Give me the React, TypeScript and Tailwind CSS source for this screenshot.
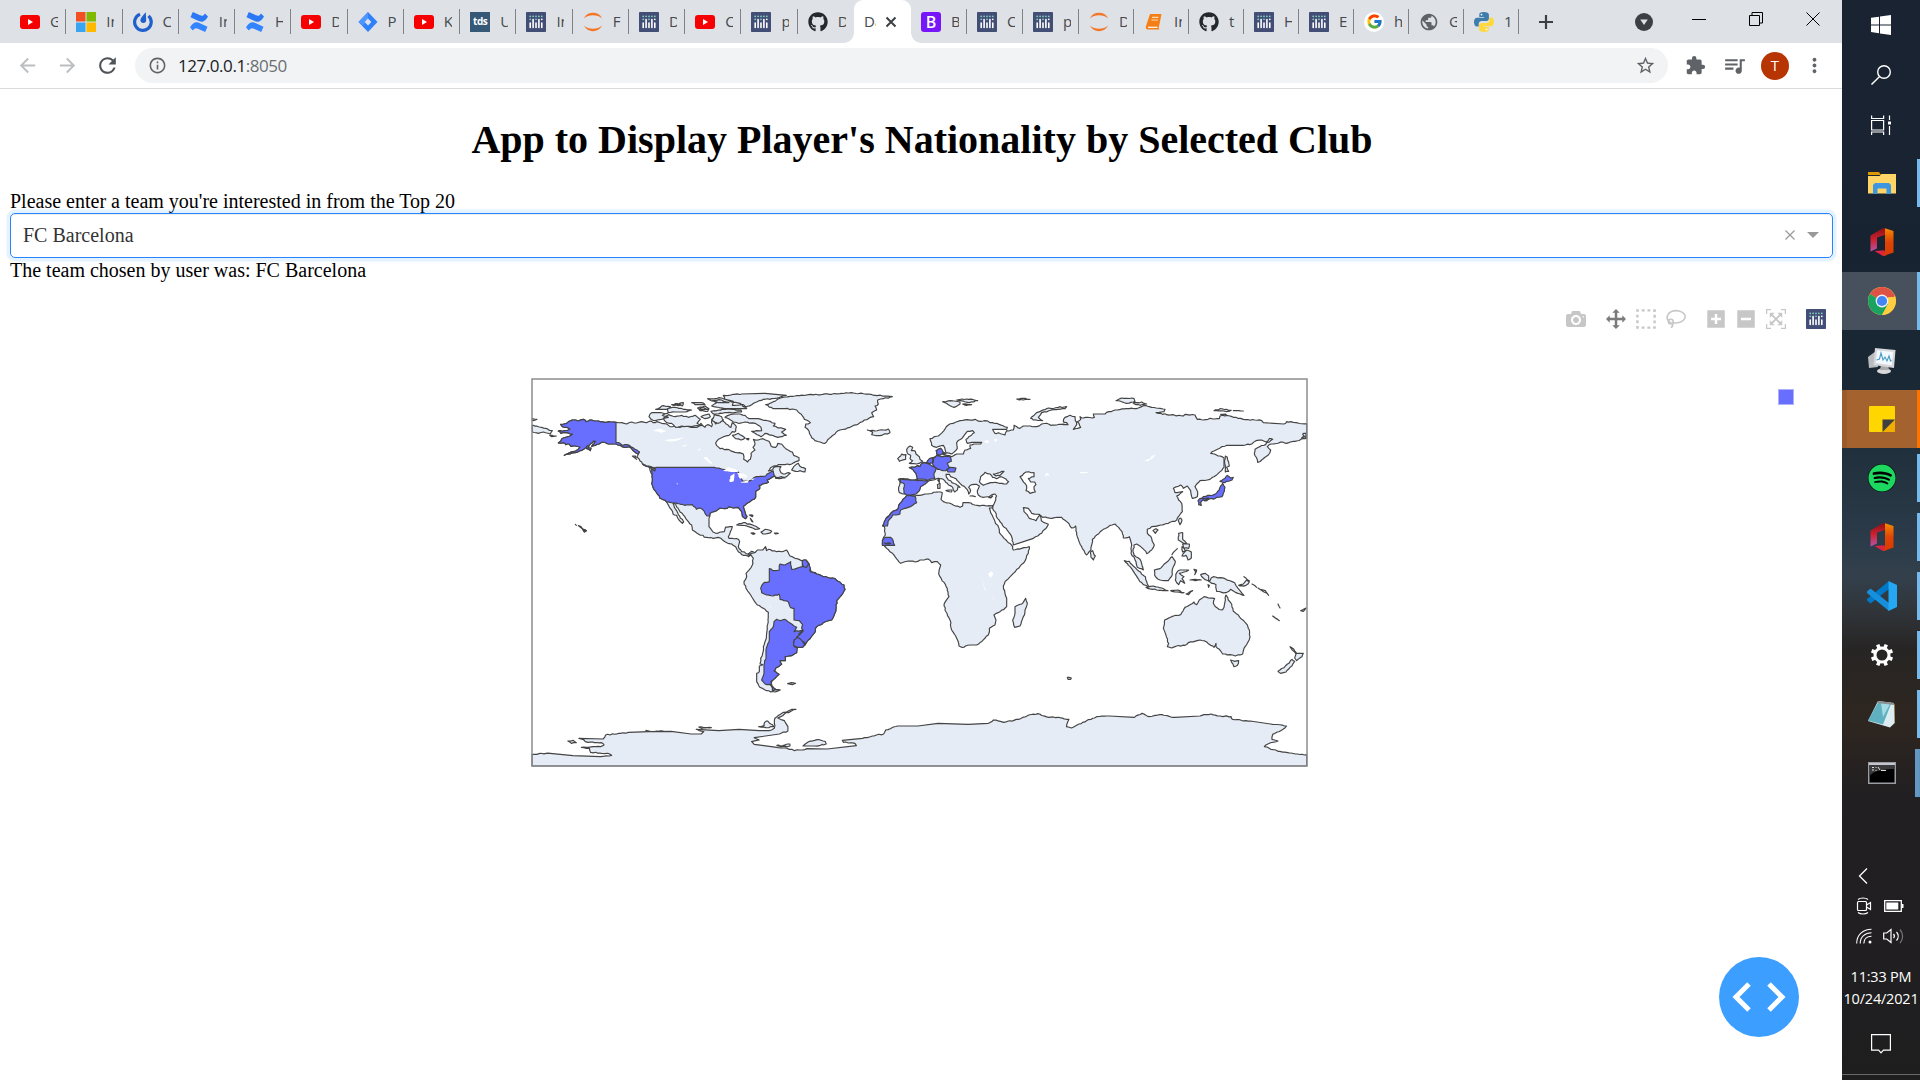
import type { ReactNode } from 'react';
import {
  MdArrowBack,
  MdArrowForward,
  MdRefresh,
  MdInfoOutline,
  MdStarBorder,
  MdExtension,
  MdQueueMusic,
  MdMoreVert,
  MdPublic,
} from 'react-icons/md';
import { FaGithub, FaSpotify } from 'react-icons/fa';
import { FcGoogle } from 'react-icons/fc';

/* ---------- favicons ---------- */

const Youtube = () => (
  <svg viewBox="0 0 20 20" className="size-5">
    <rect y="3" width="20" height="14" rx="3" fill="#f60002" />
    <path d="M8 7v6l5-3z" fill="#fff" />
  </svg>
);
const Microsoft = () => (
  <svg viewBox="0 0 20 20" className="size-5">
    <path d="M0 0h9.5v9.5H0z" fill="#f25022" />
    <path d="M10.5 0H20v9.5h-9.5z" fill="#7fba00" />
    <path d="M0 10.5h9.5V20H0z" fill="#39a5f0" />
    <path d="M10.5 10.5H20V20h-9.5z" fill="#ffb900" />
  </svg>
);
const Mattermost = () => (
  <svg viewBox="0 0 20 20" className="size-5" fill="none" stroke="#2060cc">
    <path d="M7 2.300A8.300 8.300 0 1 0 15.500 3.900" strokeWidth="3.200" />
    <path d="M12.800 .3C9.500 4 7.200 6.500 7.400 8.600C7.700 10.400 9 11.200 10.400 11.100C12.200 11 13.200 9.700 13.200 8z" fill="#2060cc" stroke="none" />
  </svg>
);
const Confluence = () => (
  <svg viewBox="0 0 20 20" className="size-5">
    <path d="M1 15.500C4.500 9.500 7.500 9.600 11.500 11.500L18.500 14.800L16.200 20L9.500 16.900C6.500 15.500 5.700 16 4 18.500Z" fill="#3384ff" />
    <path d="M19 4.500C15.500 10.500 12.500 10.400 8.500 8.500L1.500 5.200L3.800 0L10.500 3.100C13.500 4.500 14.300 4 16 1.500Z" fill="#2a78f5" />
  </svg>
);
const Jira = () => (
  <svg viewBox="0 0 20 20" className="size-5">
    <path d="M10 0l9.500 10L10 20L.5 10z" fill="#2f80fb" />
    <path d="M10 0L.5 10L5 13.500L10 7z" fill="#4d96ff" />
    <path d="M10 6.500l3.300 3.500L10 13.500L6.700 10z" fill="#dee1e6" />
  </svg>
);
const Tds = () => (
  <div className="flex size-5 items-center justify-center bg-[#355876] font-['Open_Sans',sans-serif] text-[10px] font-bold tracking-[-0.5px] text-white">
    tds
  </div>
);
const Plotly = () => (
  <svg viewBox="0 0 20 20" className="size-5">
    <rect width="20" height="20" rx="0.800" fill="#434e76" />
    <g fill="#80cfbe">
      <circle cx="4.200" cy="4.300" r="0.900" />
      <circle cx="7.100" cy="4.300" r="0.900" />
      <circle cx="10" cy="4.300" r="0.900" />
      <circle cx="12.900" cy="4.300" r="0.900" />
      <circle cx="15.800" cy="4.300" r="0.900" />
      <circle cx="4.200" cy="7.300" r="0.900" />
      <circle cx="10" cy="7.300" r="0.900" />
    </g>
    <g fill="#fff">
      <circle cx="15.800" cy="7.300" r="0.900" />
      <rect x="3.400" y="10.200" width="1.600" height="6" rx="0.800" />
      <rect x="6.300" y="6.800" width="1.600" height="9.400" rx="0.800" />
      <rect x="9.200" y="10.200" width="1.600" height="6" rx="0.800" />
      <rect x="12.100" y="6.800" width="1.600" height="9.400" rx="0.800" />
      <rect x="15" y="10.200" width="1.600" height="6" rx="0.800" />
    </g>
  </svg>
);
const Jupyter = () => (
  <svg viewBox="0 0 20 20" className="size-5">
    <path d="M.8 6.500C3 2.500 6 .8 10 .8s7 1.700 9.200 5.700C16.500 4.200 13.500 3.200 10 3.200S3.500 4.200 .8 6.500z" fill="#f37726" />
    <path d="M.8 13.500C3 17.500 6 19.200 10 19.200s7-1.700 9.200-5.700c-2.700 2.300-5.700 3.300-9.200 3.300s-6.500-1-9.200-3.300z" fill="#f37726" />
  </svg>
);
const Github = () => <FaGithub className="size-5 text-[#24292e]" />;
const Bootstrap = () => (
  <div className="flex size-5 items-center justify-center rounded-[3px] bg-[#7716f9] font-['Open_Sans',sans-serif] text-[16px] leading-none font-semibold text-white">
    B
  </div>
);
const Book = () => (
  <svg viewBox="0 0 20 20" className="size-5">
    <path d="M6 2h11.500L15 14.500c-.6 1.200 0 2 .3 3H4C2 17.500 1.500 16 2 14z" fill="#f57f17" />
    <path d="M8 5.300h6.500M7.500 8h6.500" stroke="#ffd9ae" strokeWidth="1.200" />
    <path d="M4 15.300h9.500" stroke="#fff" strokeWidth="1.200" />
  </svg>
);
const Google = () => (
  <div className="flex size-5 items-center justify-center rounded-full bg-white">
    <FcGoogle className="size-[17px]" />
  </div>
);
const Globe = () => <MdPublic className="size-5 text-[#5f6368]" />;
const Python = () => (
  <svg viewBox="0 0 20 20" className="size-5">
    <path d="M9.800 0C6.500 0 5.300 1 5.300 2.700V5h4.900v.8H3.200C1 5.800 0 7.500 0 10s1 4.500 3 4.500h1.700V12c0-1.800 1.400-3 3-3h4.800c1.400 0 2.400-1.100 2.400-2.500V2.700C14.900 1 13 0 9.800 0z" fill="#3e7cac" />
    <path d="M10.200 20c3.300 0 4.500-1 4.500-2.700V15H9.800v-.8h7C19 14.200 20 12.500 20 10s-1-4.500-3-4.500h-1.700V8c0 1.800-1.400 3-3 3H7.500c-1.400 0-2.400 1.100-2.400 2.500v3.800C5.100 19 7 20 10.200 20z" fill="#ffd83d" />
    <circle cx="7.500" cy="2.600" r="0.900" fill="#fff" />
    <circle cx="12.500" cy="17.400" r="0.900" fill="#fff" />
  </svg>
);

type TabInfo = { icon: () => ReactNode; text: string };

const leftTabs: TabInfo[] = [
  { icon: Youtube, text: 'G' },
  { icon: Microsoft, text: 'In' },
  { icon: Mattermost, text: 'C' },
  { icon: Confluence, text: 'In' },
  { icon: Confluence, text: 'H' },
  { icon: Youtube, text: 'D' },
  { icon: Jira, text: 'P' },
  { icon: Youtube, text: 'K' },
  { icon: Tds, text: 'U' },
  { icon: Plotly, text: 'In' },
  { icon: Jupyter, text: 'F' },
  { icon: Plotly, text: 'D' },
  { icon: Youtube, text: 'C' },
  { icon: Plotly, text: 'p' },
  { icon: Github, text: 'D' },
];
const rightTabs: TabInfo[] = [
  { icon: Bootstrap, text: 'B' },
  { icon: Plotly, text: 'C' },
  { icon: Plotly, text: 'p' },
  { icon: Jupyter, text: 'D' },
  { icon: Book, text: 'In' },
  { icon: Github, text: 't' },
  { icon: Plotly, text: 'H' },
  { icon: Plotly, text: 'E' },
  { icon: Google, text: 'h' },
  { icon: Globe, text: 'G' },
  { icon: Python, text: '1' },
];

const Tab = ({ tab, last, size }: { tab: TabInfo; last?: boolean; size: string }) => (
  <div className={`flex h-full min-w-0 items-center pl-[10px] ${size}`}>
    <span className="shrink-0">
      <tab.icon />
    </span>
    <span className="ml-[10px] w-[8px] overflow-hidden text-[15px] whitespace-nowrap text-[#45494d]">{tab.text}</span>
    <span className={last ? 'hidden' : 'ml-auto h-[25px] w-px bg-[#808387]'} />
  </div>
);

const TabStrip = () => (
  <div className="flex h-[43px] bg-[#dee1e6]">
    <div className="flex w-[854px] pl-[10px]">
      {leftTabs.map((t, i) => (
        <Tab key={i} tab={t} last={i === leftTabs.length - 1} size="flex-1" />
      ))}
    </div>
    <div className="relative flex w-[57px] items-center rounded-t-[9px] bg-white pl-[10px]">
      <span className="absolute bottom-0 -left-[10px] size-[10px] bg-[radial-gradient(circle_at_0_0,transparent_9.5px,white_10px)]" />
      <span className="absolute -right-[10px] bottom-0 size-[10px] bg-[radial-gradient(circle_at_100%_0,transparent_9.5px,white_10px)]" />
      <span className="w-[12px] overflow-hidden text-[15px] text-[#45494d]">Da</span>
      <svg viewBox="0 0 12 12" className="ml-[9px] size-3">
        <path d="M1.500 1.500l9 9M10.500 1.500l-9 9" stroke="#3c4043" strokeWidth="2" />
      </svg>
    </div>
    <div className="flex w-[608px]">
      {rightTabs.map((t, i) => (
        <Tab key={i} tab={t} size={i < 3 ? 'w-14 shrink-0' : 'flex-1'} />
      ))}
    </div>
    <div className="flex flex-1 items-center">
      <svg viewBox="0 0 16 16" className="ml-[19px] size-4">
        <path d="M8 1v14M1 8h14" stroke="#3c4043" strokeWidth="2.200" />
      </svg>
      <svg viewBox="0 0 18 18" className="ml-[81px] size-[18px]">
        <circle cx="9" cy="9" r="9" fill="#3c4043" />
        <path d="M5.200 6.500h7.600L9 12z" fill="#dee1e6" />
      </svg>
      <svg viewBox="0 0 14 14" className="mb-[6px] ml-[39px] size-3.5">
        <path d="M0 7.500h14" stroke="#000" />
      </svg>
      <svg viewBox="0 0 14 14" className="mb-[6px] ml-[43px] size-3.5">
        <path d="M.5 3.500h10v10H.5zM3 3V.5h10.500V11H11" fill="none" stroke="#000" />
      </svg>
      <svg viewBox="0 0 14 14" className="mb-[6px] ml-[43px] size-3.5">
        <path d="M.5 .5l13 13M13.500 .5l-13 13" stroke="#000" />
      </svg>
    </div>
  </div>
);

const AddressBar = () => (
  <div className="flex h-[46px] items-center border-b border-[#d9dbdf] bg-white">
    <MdArrowBack className="ml-[16px] size-[23px] text-[#bcbec0]" />
    <MdArrowForward className="ml-[17px] size-[23px] text-[#bcbec0]" />
    <MdRefresh className="ml-[16px] size-[25px] text-[#505458]" />
    <div className="ml-[15px] flex h-[35px] w-[1533px] items-center rounded-full bg-[#f1f3f4] pr-[12px] pl-[13px]">
      <MdInfoOutline className="size-[19px] text-[#5f6368]" />
      <span className="ml-[11px] text-[17px] tracking-[-0.45px] text-[#202124]">
        127.0.0.1<span className="text-[#6b6f73]">:8050</span>
      </span>
      <MdStarBorder className="ml-auto size-[21px] text-[#5f6368]" />
    </div>
    <MdExtension className="ml-[17px] size-[21px] text-[#5f6368]" />
    <MdQueueMusic className="ml-[16px] size-[25px] text-[#5f6368]" />
    <span className="ml-[14px] flex size-7 items-center justify-center rounded-full bg-[#b73502] text-[15px] text-white">T</span>
    <MdMoreVert className="ml-[14px] size-[23px] text-[#5f6368]" />
  </div>
);

/* ---------- world map ---------- */

type Pt = [number, number];
const at = (dx: number, dy: number, pts: string, sx = 1): Pt[] =>
  pts
    .trim()
    .split(/\s+/)
    .map((p) => {
      const [x, y] = p.split(',').map(Number);
      return [x * sx + dx, y + dy];
    });

// Adds small coastal irregularities; the offset depends only on where a point
// lies, so a shared border bends the same way from both sides.
const noise = (x: number, y: number) => {
  const v = Math.sin(x * 12.9898 + y * 78.233) * 43758.5453;
  return (v - Math.floor(v)) * 2 - 1;
};
const roughen = (pts: Pt[]): Pt[] =>
  pts.flatMap((p, i) => {
    const q = pts[(i + 1) % pts.length];
    const dx = q[0] - p[0];
    const dy = q[1] - p[1];
    const len = Math.hypot(dx, dy);
    if (len < 9 || len > 60 || dx === 0 || dy === 0) return [p];
    const n = Math.max(2, Math.round(len / 7));
    const out: Pt[] = [p];
    for (let k = 1; k < n; k++) {
      const x = p[0] + (dx * k) / n;
      const y = p[1] + (dy * k) / n;
      out.push([x + noise(Math.round(x), Math.round(y)) * 1.700, y + noise(Math.round(y), Math.round(x)) * 1.700]);
    }
    return out;
  });
const ring = (...parts: Pt[][]) =>
  'M' +
  roughen(parts.flat())
    .map(([x, y]) => `${x.toFixed(1)} ${y.toFixed(1)}`)
    .join('L') +
  'Z';
const rings = (dx: number, dy: number, list: string[]) => list.map((s) => ring(at(dx, dy, s))).join('');

const alaska = `273,157 262,156 250,155 238,157 220,153 207,153 200,150 190,153 183,155 175,148 160,153 152,150 145,150 135,153 125,160 107,163 112,170 125,172 135,178 118,182 100,183 108,190 122,188 143,192 130,200 115,204 108,212 100,219 115,218 122,224 132,222 138,229 152,228 165,231 160,238 145,245 130,250 118,256 135,252 150,248 165,242 177,237 188,226 185,236 196,242 198,234 190,234 192,226 198,220 205,213 212,214 207,222 200,229 212,226 222,222 232,216 245,220 260,222 273,222 285,226 300,232 312,230 322,239 330,246 340,252 343,246 330,238 318,230 306,224 295,226 285,220 273,217`;

const northAmerica = ring(
  at(0, 0, alaska.split(' ').slice(0, 66).join(' ')),
  at(
    0,
    0,
    `340,250 335,262 343,268 350,276 356,286 372,290 392,304 388,293 378,290 374,296 382,315 380,340 384,352 400,375 404,384 412,388 425,396 430,405 440,420 444,432 455,436 462,450 472,460 476,456 466,444 458,428 448,412 444,400 452,402 456,412 462,420 475,435 490,455 500,465 502,480 520,492 545,502 565,505 580,502 600,515 620,522 632,530 640,545 655,556 668,558 672,552 684,554 690,548 680,544 668,552 650,545 640,530 644,515 636,506 612,505 610,500 616,485 622,470 602,471 598,485 578,490 564,486 552,470 552,445 555,430 570,424 585,414 600,416 612,410 625,414 640,412 650,425 652,438 662,446 666,440 658,420 656,408 672,397 692,382 692,364 704,356 702,346 712,342 730,337 726,330 742,322 750,318 752,325 765,322 785,320 796,310 790,308 780,312 768,308 764,300 768,290 752,290 736,302 730,303 742,290 760,284 780,284 800,282 822,272 822,263 806,256 802,246 785,238 778,232 770,222 758,220 752,232 738,228 732,214 714,206 700,210 685,208 690,222 684,232 690,240 678,250 676,268 668,276 656,268 655,252 630,247 605,238 585,236 572,220 580,208 596,200 612,196 622,185 632,184 634,170 622,158 618,172 610,166 600,158 590,150 580,150 572,162 562,145 560,170 548,164 540,172 528,160 520,170 500,172 480,168 465,172 450,168 435,170 425,162 410,160 395,155 385,158 375,153 365,158 350,155 335,159 320,156 305,162 290,158`,
  ),
);

const usa = `392,292 568,292 574,294 596,298 606,302 640,306 646,318 655,334 676,332 694,320 722,318 734,308 744,302 748,318 726,330 730,337 712,342 702,346 704,356 692,364 692,382 672,397 656,408 658,420 666,440 662,446 652,438 650,425 640,412 625,414 612,410 600,416 585,414 570,424 555,430 554,438 546,438 538,424 526,414 514,418 502,404 480,406 456,400 425,396 412,388 404,384 400,375 384,352 380,340 382,315 380,298 390,303`;

const arcticIslands = [
  `372,140 380,128 400,128 428,130 412,136 430,142 410,148 392,152 378,148`,
  `415,146 430,134 450,140 470,136 490,142 510,136 526,148 516,160 530,166 500,170 470,168 452,172 440,160 425,158`,
  `392,118 410,108 436,110 425,118`,
  `428,116 450,112 475,118 500,120 480,126 450,126 430,128`,
  `440,104 475,98 472,108`,
  `450,101 468,104 456,106`,
  `500,98 530,98 540,104 510,104`,
  `518,114 540,108 552,116 548,124 525,122`,
  `522,118 534,112 548,118`,
  `528,140 552,132 556,140 540,146`,
  `558,124 600,118 648,120 650,126 600,128 566,132`,
  `560,150 568,134 590,140 595,150 578,160`,
  `548,86 590,84 625,94 622,106 655,104 665,116 600,116 560,108 575,98`,
  `562,92 590,90 612,98 580,98`,
  `595,76 650,72 720,70 784,76 740,86 715,88 695,96 680,104 660,112 645,100 620,96 600,88`,
  `600,142 610,136 636,132 660,136 672,146 700,146 735,154 750,160 745,168 782,178 770,186 784,196 758,202 742,196 720,190 708,200 690,190 680,184 710,182 708,172 690,160 660,156 640,160 620,152`,
  `622,196 640,190 660,204 648,210 632,206`,
  `664,206 672,206 670,210`,
  `800,300 806,290 820,280 824,288 842,296 840,306 826,302 812,304`,
  `752,322 770,320 780,324 762,326`,
  `322,258 332,258 330,264 335,268`,
  `354,282 372,288 388,296 372,292`,
  `22,165 50,172 82,182 76,192 55,186 40,190 22,186`,
  `22,146 36,148 22,152`,
  `74,196 94,198 80,200`,
  `174,478 184,482 178,486`,
  `151,463 154,466`,
  `160,467 168,470 172,476`,
  `635,465 655,458 680,464 704,476 690,478 670,470 650,466`,
  `708,486 720,478 740,484 730,490 714,492`,
  `678,489 690,491 684,493`,
  `748,489 760,490 752,492`,
  `673,435 684,436 682,440`,
  `676,445 680,454 684,456`,
  `720,532 724,536 722,546 718,540`,
];

const greenland = `722,104 745,95 772,82 810,78 850,74 893,73 950,70 985,69 1030,72 1050,76 1102,80 1075,86 1058,90 1060,102 1050,108 1055,120 1040,128 1046,140 1018,150 1000,162 975,172 945,180 930,192 912,206 900,220 885,216 870,212 858,198 850,180 840,172 842,162 856,158 838,148 828,132 815,120 780,116 745,116`;

const lakes = [
  `384,182 400,176 424,182 408,188`,
  `420,210 440,208 476,202 455,212 430,214`,
  `466,228 490,224 478,230`,
  `518,240 528,234 524,242`,
  `534,262 546,262 562,282 552,278`,
  `594,302 612,292 632,298 640,306 620,306 606,304`,
  `614,336 616,318 628,310 626,334`,
  `636,308 654,310 668,318 656,328 662,318 645,326`,
  `646,338 672,330 668,338`,
  `672,328 690,324 684,330`,
  `454,340 458,340 458,344`,
  `732,706 740,714 734,710`,
];

const southAmerica = `85,50 92,45 100,55 97,75 78,100 80,110 72,125 78,145 92,165 108,190 130,205 145,217 144,240 142,265 137,300 130,320 128,340 122,355 120,372 128,374 118,378 118,395 110,400 110,425 120,442 140,452 165,456 180,450 162,445 152,436 155,425 165,415 177,403 162,392 168,383 185,372 180,362 196,362 195,350 215,347 230,338 232,322 250,320 265,300 282,280 290,260 310,248 335,240 347,215 350,182 365,165 375,148 372,135 345,116 310,110 290,102 272,92 267,72 258,60 245,62 225,55 210,48 200,30 190,34 170,35 145,28 140,32 137,20 128,30 112,30 105,38 95,40`;
const brazil = `148,86 165,92 178,90 180,72 195,75 212,65 215,88 230,85 247,80 247,62 258,60 267,72 272,96 290,102 310,110 345,116 372,135 375,148 365,165 350,182 347,215 335,240 310,248 290,260 282,280 265,300 255,314 242,298 230,292 250,272 245,265 248,254 238,242 222,240 222,205 212,203 205,185 180,178 177,162 160,168 140,165 125,158 122,145 130,130 148,125`;
const guiana = `247,62 258,60 266,70 260,82 250,80`;
const uruguay = `230,292 242,298 256,312 248,322 232,322 221,317 222,300`;
const argentina = `170,238 182,242 193,238 215,252 230,262 222,275 248,270 230,292 222,300 221,318 232,324 230,338 215,347 195,350 196,362 180,362 185,372 168,383 162,392 177,403 165,415 152,425 156,436 135,432 125,420 132,400 132,375 138,350 138,330 148,300 148,275 160,260 162,245`;
const fuego = `155,436 162,445 180,450 157,452`;

const africa = `140,347 165,348 195,342 235,336 247,338 243,358 250,365 275,372 300,382 308,378 309,368 325,368 345,375 380,378 400,376 396,384 388,384 392,398 405,425 415,440 418,458 432,475 445,488 458,500 460,510 485,505 508,500 505,520 490,550 460,580 435,605 430,618 435,640 440,655 440,680 420,695 402,705 408,720 405,735 388,745 385,765 365,785 350,795 330,795 305,802 297,798 290,775 275,750 270,720 255,690 253,670 267,650 262,625 240,590 236,582 242,555 232,545 215,548 205,537 180,540 165,546 145,543 122,550 105,530 80,505 67,492 68,480 76,465 73,440 68,437 82,410 100,393 115,385 120,370`;
const eurasia = ring(
  at(
    1005,
    30,
    `128,342 118,338 116,322 120,306 115,298 130,296 165,300 172,296 168,280 160,270 148,263 165,262 172,257 180,260 186,248 200,248 210,236 222,232 232,228 228,212 242,205 247,222 262,226 275,230 290,222 310,222 315,210 332,205 330,195 342,192 362,192 365,187 345,187 322,190 318,178 343,158 338,152 322,154 302,178 290,188 292,205 275,222 258,218 250,196 230,202 215,196 210,176 235,168 265,135 300,122 345,118 362,124 375,122 390,128 410,130 442,142 440,148 398,148 405,160 415,158 435,165 440,152 460,150 462,136 480,145 490,138 512,138 530,140 545,132 560,130 572,136 590,135 612,132`,
  ),
  at(
    1605,
    30,
    `10,134 24,134 20,128 10,125 15,112 30,106 45,110 46,122 50,134 40,148 62,142 52,125 62,118 60,110 70,114 103,112 100,102 135,102 140,97 165,90 200,86 235,84 250,77 275,82 315,88 312,95 288,98 320,104 370,108 375,103 405,105 412,118 430,120 450,115 478,116 480,108 500,106 520,112 550,118 605,122 610,128 672,132 680,125 700,127 740,131 740,175 725,174 735,170 728,162 738,160 738,174 705,184 680,190 668,186 633,192 622,200 632,210 625,225 605,240 593,247 583,220 585,208 600,200 612,196 638,178 628,176 618,186 605,180 588,182 575,192 550,196 500,196 480,204 452,220 480,228 492,234 492,262 475,280 450,298 420,302 405,320 413,335 412,350 397,355 392,332 382,318 370,325 362,315 340,325 345,338 368,335 350,348 365,370 367,395 350,420 325,430 295,437 275,440 262,448 262,460 275,475 283,495 275,510 260,521 248,505 230,492 222,495 219,515 222,525 240,538 250,570 232,562 228,545 213,520 215,495 208,470 190,474 186,455 165,432 150,436 130,448 110,465 97,478 93,510 80,525 65,500 52,470 47,438 35,444 20,425 5,412`,
  ),
  at(
    1005,
    30,
    `575,415 548,412 538,403 515,400 505,385 490,383 492,395 508,415 528,422 540,405 544,422 565,433 545,460 520,475 460,495 455,470 445,455 425,430 412,415 405,395 398,386 402,372 410,348 405,342 388,350 370,352 355,345 352,332 358,318 350,313 335,314 326,322 332,332 326,342 318,325 300,310 288,296 272,290 268,283 258,283 262,295 276,308 292,316 300,322 294,320 292,330 284,336 278,322 262,310 248,297 230,296 220,300 197,303 195,312 180,318 178,332 160,345 140,342`,
  ),
);

const eastIslands = [
  `140,208 150,198 158,202 154,212 166,214 168,222 178,230 180,238 188,244 170,252 148,250 158,242 150,236 152,226 144,222`,
  `113,236 125,222 138,224 137,238 118,244`,
  `22,150 45,153 70,150 85,147 90,158 60,167 35,164 38,157`,
  `248,65 270,62 300,66 300,72 282,82 265,74`,
  `290,60 320,57 353,62 328,68`,
  `308,72 335,74 320,76`,
  `470,57 490,55 510,58 490,60`,
  `512,115 530,98 560,86 595,82 620,80 615,86 575,90 545,98 535,112 548,122 520,120`,
  `497,655 502,670 490,710 480,738 464,742 458,720 465,700 465,680 485,672`,
  `232,314 240,310 240,325 233,325`,
  `233,300 238,298 238,307`,
  `258,332 276,330 275,336`,
  `330,348 346,350`,
  `386,352 398,348 392,354`,
  `768,62 785,54 822,56 825,64 800,70`,
  `820,70 845,66 860,72 840,76`,
  `1062,92 1080,86 1114,91 1100,95`,
  `1120,92 1150,93`,
  `1082,103 1096,102 1100,106`,
  `1096,228 1102,232 1108,258 1100,262 1106,274 1096,276 1094,250`,
  `955,422 962,414 966,420 960,434`,
  `879,452 888,446 894,450 886,460`,
  `691,516 698,512 706,528 700,540 693,532`,
  `793,542 808,544 830,568 856,590 862,612 868,620 850,614 832,592 815,566`,
  `858,622 880,618 905,624 924,632 890,630`,
  `883,570 900,566 918,548 936,530 946,544 940,560 934,590 925,602 900,600 884,586`,
  `946,600 950,578 960,570 986,570 972,576 958,580 972,590 966,596 974,610 962,602 956,614`,
  `956,460 968,458 968,478 980,490 968,488 955,480`,
  `968,492 988,492 986,505 970,504`,
  `966,528 980,510 994,516 994,534 984,540 978,526`,
  `966,500 976,512 968,516`,
  `936,524 952,506`,
  `1002,568 1010,570 1004,584 1006,574`,
  `990,600 1006,598 1024,600 1006,602`,
  `932,632 954,630 972,638 950,636`,
  `978,642 998,632 986,644`,
  `1022,584 1036,580 1046,588 1046,604 1060,590 1095,596 1124,608 1132,622 1152,646 1128,638 1112,628 1098,638 1070,634 1068,614 1050,606 1034,598`,
  `1044,614 1048,616 1046,622`,
  `1136,616 1150,612 1160,600 1168,606 1158,616 1140,618`,
  `1152,590 1168,602`,
  `1176,612 1190,622`,
  `1194,624 1216,632 1226,646 1212,636`,
  `1254,672 1260,684`,
  `1238,708 1258,722 1248,716`,
  `1322,692 1338,684 1330,694`,
  `1112,840 1124,844 1136,842 1132,856 1122,860`,
  `1290,800 1300,806 1310,820 1330,820 1326,830 1310,842 1304,834 1308,822`,
  `1296,838 1304,844 1290,862 1278,876 1262,880 1254,874 1276,858`,
  `622,892 634,894 632,898 624,898`,
];
const australia = `314,720 335,710 362,704 375,682 390,674 402,666 410,674 418,660 432,650 445,654 464,656 460,670 472,684 486,690 492,682 498,645 505,660 515,672 520,694 535,705 545,718 558,730 568,750 570,770 562,790 552,805 548,822 526,828 510,824 488,822 478,808 468,800 468,790 462,802 452,796 440,786 420,780 385,788 375,796 350,798 335,804 322,800 326,790 316,760 310,745`;

const japan = `1096,294 1102,286 1112,294 1120,292 1116,300 1100,304 1094,308 1086,306 1080,304 1090,298`;
const honshu = `1088,310 1095,322 1090,340 1086,350 1070,352 1060,358 1050,356 1040,362 1030,360 1022,368 1024,376 1016,374 1014,362 1030,350 1048,346 1062,344 1078,330 1082,318`;
const shikoku = `1028,356 1046,354 1034,362`;
const europeBlue = [
  `118,297 165,300 205,303 195,312 182,320 178,332 168,342 140,345 132,340 133,312 122,308`,
  `148,263 165,262 172,257 180,260 188,248 205,252 228,264 222,280 225,296 200,300 172,298 168,280 160,270`,
  `218,236 230,226 250,230 270,228 274,244 262,250 268,262 258,272 232,268 224,262 218,252`,
  `200,248 212,234 222,232 220,246 208,250`,
  `230,212 242,205 250,218 240,226 230,222`,
  `248,214 258,220 252,224`,
  `260,268 272,262 288,264 284,276 264,276`,
  `140,347 165,348 170,368 145,382 122,390 120,402 98,405 84,425 82,438 68,438 78,415 95,398 115,385 120,370`,
  `67,482 76,472 92,472 100,484 104,496 67,496`,
  `72,489 92,490 84,492`,
];
const seas = [
  `358,305 362,290 375,277 390,282 398,292 410,296 420,290 432,294 446,305 440,312 410,308 385,310 370,316`,
  `400,282 432,274 420,286 408,288`,
  `480,290 498,276 522,278 522,290 505,296 512,306 524,306 528,314 522,320 526,336 510,340 498,332 500,318 488,302`,
];
const eastLakes = [
  `384,582 394,574 400,580 392,594`,
  `368,598 370,612 378,632 372,622`,
  `400,640 404,668 402,660`,
  `372,184 382,180 388,186 378,190`,
  `402,176 412,178 408,186`,
  `554,290 560,278 568,286`,
  `652,284 662,276 688,276 664,280`,
  `848,244 870,236 888,218 880,234 864,244`,
  `418,500 423,500 421,502`,
  `256,200 268,194 264,200`,
];

const antarctica = `14,283 50,280 95,287 150,290 172,286 168,282 130,277 128,265 112,262 150,260 157,255 152,248 125,247 107,235 155,237 160,225 190,220 205,217 245,215 290,214 330,222 350,222 355,215 340,208 385,212 425,208 465,212 485,212 495,205 496,175 510,160 530,148 538,148 515,162 502,174 515,182 522,200 522,213 505,222 455,233 465,240 450,245 455,253 500,262 530,268 535,272 560,266 600,267 658,257 655,250 632,247 630,241 670,235 690,228 712,222 716,210 740,198 780,198 820,190 880,193 920,190 930,180 950,187 980,178 1000,165 1018,161 1040,172 1062,173 1080,178 1075,200 1085,204 1100,192 1115,182 1135,170 1160,168 1210,172 1225,160 1240,170 1265,164 1290,172 1340,168 1362,162 1380,168 1402,170 1405,178 1440,183 1480,192 1512,198 1505,208 1485,222 1483,238 1495,243 1475,252 1468,260 1495,274 1530,282 1552,284 1552,318 14,318`;
const antarcticHoles = [
  `552,258 565,244 580,239 596,244 598,252 575,258`,
  `500,256 512,257 526,252 526,258 510,260`,
  `464,200 475,197 476,187 482,183 488,192 494,200 478,203`,
  `85,243 96,241 102,248 92,250`,
  `345,201 370,203 350,205`,
  `240,211 248,214`,
  `260,213 275,214`,
];

const land = [
  northAmerica,
  rings(0, 0, arcticIslands),
  ring(at(0, 0, greenland)),
  ring(at(585, 510, southAmerica)),
  `M788 941l12 -3 12 2 -10 4z`,
  ring(at(1005, 30, africa)),
  eurasia,
  rings(1005, 30, eastIslands),
  ring(at(1605, 30, australia)),
  ring(at(0, 870, antarctica, 1.511)),
  antarcticHoles.map((s) => ring(at(0, 870, s, 1.511))).join(''),
];
const selected = [
  ring(at(0, 0, alaska)),
  ring(at(0, 0, usa)),
  rings(0, 0, ['172,476 184,482 178,486']),
  rings(585, 510, [brazil, guiana, uruguay, argentina, fuego]),
  rings(1005, 30, europeBlue),
  rings(1005, 30, [japan, honshu, shikoku]),
];

const WorldMap = () => (
  <svg viewBox="18 24 2334 1170" className="h-[390px] w-[778px]">
    <g stroke="#444" strokeWidth="3.500" strokeLinejoin="round">
      <g fill="#e5ecf6">
        {land.map((d, i) => (
          <path key={i} d={d} />
        ))}
      </g>
      <path d={rings(1005, 30, seas)} fill="#fff" />
      <g fill="#686fff">
        {selected.map((d, i) => (
          <path key={i} d={d} />
        ))}
      </g>
    </g>
    <path d={rings(0, 0, lakes) + rings(1005, 30, eastLakes)} fill="#fff" />
    <rect x="21" y="27" width="2325" height="1161" fill="none" stroke="#8d8d90" strokeWidth="4.500" />
  </svg>
);

/* ---------- chart toolbar ---------- */

const ModeIcon = ({ d, w = 1000, active }: { d: string; w?: number; active?: boolean }) => (
  <svg viewBox={`0 0 ${w} 1000`} className={`h-5 ${w === 875 ? 'w-[18px]' : 'w-5'} ${active ? 'fill-[#7b7b7c]' : 'fill-[#c7c7c7]'}`}>
    <path d={d} transform="matrix(1 0 0 -1 0 850)" />
  </svg>
);
const camera =
  'm500 450c-83 0-150-67-150-150 0-83 67-150 150-150 83 0 150 67 150 150 0 83-67 150-150 150z m400 150h-120c-16 0-34 13-39 29l-31 93c-6 15-23 28-40 28h-340c-16 0-34-13-39-28l-31-94c-6-15-23-28-40-28h-120c-55 0-100-45-100-100v-450c0-55 45-100 100-100h800c55 0 100 45 100 100v450c0 55-45 100-100 100z m-400-550c-138 0-250 112-250 250 0 138 112 250 250 250 138 0 250-112 250-250 0-138-112-250-250-250z m365 380c-19 0-35 16-35 35 0 19 16 35 35 35 19 0 35-16 35-35 0-19-16-35-35-35z';
const pan =
  'm1000 350l-187 188 0-125-250 0 0 250 125 0-188 187-187-187 125 0 0-250-250 0 0 125-188-188 186-187 0 125 252 0 0-250-125 0 187-188 188 188-125 0 0 250 250 0 0-126 187 188z';
const zoomIn = 'm1 787l0-875 875 0 0 875-875 0z m687-500l-187 0 0-187-125 0 0 187-188 0 0 125 188 0 0 187 125 0 0-187 187 0 0-125z';
const zoomOut = 'm0 788l0-876 875 0 0 876-875 0z m688-500l-500 0 0 125 500 0 0-125z';
const reset =
  'm250 850l-187 0-63 0 0-62 0-188 63 0 0 188 187 0 0 62z m688 0l-188 0 0-62 188 0 0-188 62 0 0 188 0 62-62 0z m-875-938l0 188-63 0 0-188 0-62 63 0 187 0 0 62-187 0z m875 188l0-188-188 0 0-62 188 0 62 0 0 62 0 188-62 0z m-125 188l-1 0-93-94-156 156 156 156 92-93 2 0 0 250-250 0 0-2 93-92-156-156-156 156 94 92 0 2-250 0 0-250 0 0 93 93 157-156-157-156-93 94 0 0 0-250 250 0 0 0-94 93 156 157 156-157-93-93 0 0 250 0 0 250z';

const ModeBar = () => (
  <div className="flex h-5 items-center justify-end pr-[7px]">
    <ModeIcon d={camera} />
    <span className="ml-5 flex gap-[10px]">
      <ModeIcon d={pan} active />
      <svg viewBox="0 0 20 20" className="size-5">
        <rect x="1.400" y="1.400" width="17.200" height="17.200" fill="none" stroke="#c7c7c7" strokeWidth="2.400" strokeDasharray="2.900 2.833" strokeDashoffset="1.400" />
      </svg>
      <svg viewBox="0 0 20 20" className="size-5" fill="none" stroke="#c7c7c7" strokeWidth="1.600">
        <path d="M5.500 14C2 12.500 .5 9.500 1.600 6.500C3 2.500 8 .8 13 2C17.500 3.200 20 6 18.800 9.200C17.500 12.500 12.500 14.500 7 13.800" />
        <circle cx="4.800" cy="12.600" r="2.400" />
        <path d="M6.500 14.500C7.200 16 6.500 17.500 5 18.700" />
      </svg>
    </span>
    <span className="ml-[21px] flex gap-3">
      <ModeIcon d={zoomIn} w={875} />
      <ModeIcon d={zoomOut} w={875} />
      <span className="-ml-px">
        <ModeIcon d={reset} />
      </span>
    </span>
    <span className="ml-5">
      <Plotly />
    </span>
  </div>
);

const PageBody = () => (
  <main className="relative flex flex-1 flex-col bg-white pr-[9px] pl-[10px] font-['Liberation_Serif',serif] text-[20px] leading-[23px] text-black">
    <h1 className="mt-[28px] pl-px text-center text-[40px] leading-[46px] font-bold">App to Display Player's Nationality by Selected Club</h1>
    <div className="mt-[27px]">Please enter a team you're interested in from the Top 20</div>
    <div className="flex h-[45px] items-center rounded-[5px] border border-[#2684ff] pr-[13px] pl-[12px] text-[#333] shadow-[inset_0_1px_1px_rgba(0,0,0,0.075),0_0_0_3.5px_rgba(0,126,255,0.1)]">
      FC Barcelona
      <svg viewBox="0 0 10 10" className="mr-[12px] mb-[2px] ml-auto size-[10px]">
        <path d="M.5 .5l9 9M9.500 .5l-9 9" stroke="#999" strokeWidth="1.200" />
      </svg>
      <svg viewBox="0 0 12 6" className="mb-[2px] h-[6px] w-3">
        <path d="M0 0h12l-6 6z" fill="#999" />
      </svg>
    </div>
    <div className="mt-px">The team chosen by user was: FC Barcelona</div>
    <div className="mt-[27px]">
      <ModeBar />
    </div>
    <div className="mt-[49px] flex items-start">
      <div className="ml-[521px]">
        <WorldMap />
      </div>
      <span className="mt-[11px] ml-[469px] size-4 border border-[#aeb2fb] bg-[#686fff]" />
    </div>
    <div className="absolute right-[43px] bottom-[43px] flex size-20 items-center justify-center rounded-full bg-[#3c9eff]">
      <svg viewBox="0 0 54 30" className="h-[30px] w-[54px]" fill="none" stroke="#fff" strokeWidth="5">
        <path d="M17 2L4 15l13 13M37 2l13 13l-13 13" />
      </svg>
    </div>
  </main>
);

/* ---------- task bar ---------- */

const WindowsLogo = () => (
  <svg viewBox="0 0 20 20" className="size-5" fill="#fff">
    <path d="M0 2.800l8-1.100v7.700H0zM9 1.500L20 0v9.400H9zM0 10.400h8v7.800l-8-1.100zM9 10.400h11V20L9 18.400z" />
  </svg>
);
const SearchIcon = () => (
  <svg viewBox="0 0 20 20" className="size-5" fill="none" stroke="#fff" strokeWidth="1.400">
    <circle cx="13" cy="7" r="6.300" />
    <path d="M8.600 11.600L.5 19.600" />
  </svg>
);
const TaskView = () => (
  <svg viewBox="0 0 20 20" className="size-5" fill="none" stroke="#fff" strokeWidth="1.200">
    <path d="M.6 5.500h12v9.500H.6zM.6 .5V3.500h12V.5M.6 20v-3h12v3M18.500 .5V5M18.500 11v9" />
    <path d="M17 6.500h3v3h-3z" fill="#fff" stroke="none" />
  </svg>
);
const Folder = () => (
  <svg viewBox="0 0 28 24" className="h-6 w-7">
    <path d="M0 1h11l2 3H0z" fill="#dc9800" />
    <path d="M0 5h11.500l2-2H28v19.500H0z" fill="#ffd566" />
    <path d="M5 23v-9l2-2h14l2 2v9h-4.500v-5.500h-9V23z" fill="#3c96e0" />
  </svg>
);
const Office = () => (
  <svg viewBox="0 0 24 28" className="h-7 w-6">
    <defs>
      <linearGradient id="officeLeft" x1="0" y1="0" x2="0" y2="1">
        <stop offset="0" stopColor="#8c1014" />
        <stop offset="0.500" stopColor="#cf2232" />
        <stop offset="1" stopColor="#b455a8" />
      </linearGradient>
      <linearGradient id="officeRight" x1="0" y1="0" x2="0" y2="1">
        <stop offset="0" stopColor="#f58a00" />
        <stop offset="0.500" stopColor="#e04304" />
        <stop offset="1" stopColor="#d83b01" />
      </linearGradient>
    </defs>
    <path d="M.5 7.500L13 0l3 1v5.500L7 9.500v11L.5 23.500z" fill="url(#officeLeft)" />
    <path d="M4.500 23l10-.8 1.500 5.300-3 .5z" fill="#e02440" />
    <path d="M15 .3l8.500 2.700v21.500L13.500 28l1.500-3.500z" fill="url(#officeRight)" />
  </svg>
);
const Chrome = () => (
  <svg viewBox="0 0 28 28" className="size-7">
    <circle cx="14" cy="14" r="14" fill="#ffcd40" />
    <path d="M14 14L1.900 7A14 14 0 0 1 26.100 7z" fill="#de5246" />
    <path d="M14 14L1.900 7A14 14 0 0 0 14 28l6-10.500z" fill="#1aa260" />
    <path d="M14 7h12.100L27 10H14z" fill="#de5246" />
    <path d="M20.200 14L26.900 9A14 14 0 0 1 14 28l6-11z" fill="#ffcd40" />
    <circle cx="14" cy="14" r="6.400" fill="#f1f1f1" />
    <circle cx="14" cy="14" r="5.100" fill="#4285f4" />
  </svg>
);
const Monitor = () => (
  <svg viewBox="0 0 28 26" className="h-[26px] w-7">
    <path d="M0 9l8-6 2 16-9 1z" fill="#b9bcbe" />
    <ellipse cx="16" cy="23" rx="7" ry="3" fill="#d8d8d8" />
    <path d="M13 17h7l1 5h-9z" fill="#aaa" />
    <path d="M7 0l20.500 2-1.500 18L5.500 17z" fill="#d5d7d9" />
    <path d="M9 2.300l16 1.600-1.200 13.300L7.700 15z" fill="#f2f9ff" />
    <path d="M8.500 12l3-1 1.500-6 2 7 2-3 2 4 2-5 1.500 5 1-1" fill="none" stroke="#4a9cc7" strokeWidth="1.100" />
  </svg>
);
const Sticky = () => (
  <svg viewBox="0 0 26 26" className="size-[26px]">
    <rect width="26" height="26" rx="1" fill="#ffd600" />
    <path d="M26 13.500V26H13.500z" fill="#f2ae00" />
    <path d="M13.500 13.500H26L13.500 26z" fill="#3f3f41" />
  </svg>
);
const Spotify = () => (
  <span className="flex rounded-full bg-black">
    <FaSpotify className="size-7 text-[#1ed760]" />
  </span>
);
const VsCode = () => (
  <svg viewBox="0 0 30 30" className="size-[30px]">
    <path d="M22 0v8L3.500 22.500L0 19.500v-1.500z" fill="#0078c8" />
    <path d="M22 30v-8L3.500 7.500L0 10.500v1.500z" fill="#1690dc" />
    <path d="M21.500 0L30 4v22l-8.500 4z" fill="#24a8f4" />
  </svg>
);
const Gear = () => (
  <svg viewBox="0 0 24 24" className="size-6">
    <circle cx="12" cy="12" r="7" fill="none" stroke="#fff" strokeWidth="3" />
    <g stroke="#fff" strokeWidth="3.600">
      {[22.5, 67.5, 112.5, 157.5].map((a) => (
        <path key={a} d="M12 .8v4M12 19.200v4" transform={`rotate(${a} 12 12)`} />
      ))}
    </g>
  </svg>
);
const Notepad = () => (
  <svg viewBox="0 0 28 28" className="size-7">
    <path d="M20 2.500l7 1.500v19l-3 2.500z" fill="#8a6a2c" />
    <path d="M10 1l16 2 .5 20-4.500 4.500L0 21z" fill="#dcecf0" />
    <path d="M10 2.500l13 1.500-8 20.500L0 20.500z" fill="#5fb0c0" />
    <path d="M13 3l9 1-7 13z" fill="#a5dbe4" />
    <path d="M10 1l16 2v2L9.500 3z" fill="#8b8f91" />
  </svg>
);
const Terminal = () => (
  <svg viewBox="0 0 28 22" className="h-[22px] w-7">
    <rect x="0.750" y="0.750" width="26.500" height="20.500" fill="#000" stroke="#9a9ca4" strokeWidth="1.500" />
    <path d="M1 1h26v2H1z" fill="#c3c6cc" />
    <path d="M1.500 3h25v4C15 7 5 9 1.500 14z" fill="#3b3b3d" />
    <path d="M4 5.500h2M4 8h2M8 5v1M8 8v1M10 5l2 3M13 8.500h5" stroke="#ddd" strokeWidth="1" />
  </svg>
);

type Entry = { icon: () => ReactNode; bar?: string; cell?: string; nudge?: string };
const entries: Entry[] = [
  { icon: Folder, bar: 'h-12 w-[3px] bg-[#76b9ed]', nudge: 'pl-[5px]' },
  { icon: Office, nudge: 'pl-[1px]' },
  { icon: Chrome, bar: 'h-full w-[3px] bg-[#76b9ed]', cell: 'bg-[#46515d]', nudge: 'pl-[5px]' },
  { icon: Monitor, nudge: 'pt-[3px] pl-[1px]' },
  { icon: Sticky, bar: 'h-full w-[3px] bg-[#ff7200]', cell: 'bg-[#a4622f] border-l-[5px] border-[#9c5a28]' },
  { icon: Spotify, bar: 'h-12 w-[3px] bg-[#76b9ed]', nudge: 'pl-[4px]' },
  { icon: Office, bar: 'h-12 w-[3px] bg-[#76b9ed]', nudge: 'pl-[4px]' },
  { icon: VsCode, bar: 'h-12 w-[3px] bg-[#76b9ed]', nudge: 'pl-[5px]' },
  { icon: Gear, bar: 'h-12 w-[3px] bg-[#76b9ed]', nudge: 'pl-[4px]' },
  { icon: Notepad, bar: 'h-12 w-[3px] bg-[#76b9ed]', nudge: 'pl-[4px]' },
  { icon: Terminal, bar: 'h-12 w-[5px] border-r border-[#5d93bd] bg-[#6298c3]', nudge: 'pl-[6px]' },
];

const TaskBar = () => (
  <aside className="flex w-[78px] flex-col bg-[linear-gradient(to_bottom,#1a2331_0px,#182331_260px,#1a2935_400px,#2b3b49_540px,#33404c_575px,#30353a_610px,#272524_650px,#2e2620_720px,#211f22_800px,#1f1e1f_1080px)] text-white">
    <div className="flex h-[50px] items-center justify-center">
      <WindowsLogo />
    </div>
    <div className="flex h-[50px] items-center justify-center">
      <SearchIcon />
    </div>
    <div className="flex h-[50px] items-center justify-center">
      <TaskView />
    </div>
    <div className="mt-[3px]">
      {entries.map(({ icon: Icon, bar, cell, nudge }, i) => (
        <div key={i} className="flex h-[59px] items-center">
          <div className={`flex h-[58px] w-full items-center ${cell ?? ''}`}>
            <span className={`flex flex-1 justify-center ${nudge ?? ''}`}>
              <Icon />
            </span>
            <span className={bar ?? ''} />
          </div>
        </div>
      ))}
    </div>
    <div className="mt-[66px] flex h-4 pl-[16px]">
      <svg viewBox="0 0 10 16" className="h-4 w-[10px]" fill="none" stroke="#fff" strokeWidth="1.300">
        <path d="M9 .5L1.500 8L9 15.500" />
      </svg>
    </div>
    <div className="mt-[13px] flex h-[18px] items-center pl-[14px]">
      <svg viewBox="0 0 16 18" className="h-[18px] w-4" fill="none" stroke="#fff" strokeWidth="1.200">
        <rect x="1.500" y="4.500" width="9" height="9" rx="1" />
        <path d="M10.500 8l4-2.500v7l-4-2.500M2 2.500C4.500 .5 9.500 .5 12 2.500M2 15.500c2.500 2 7.500 2 10 0" />
      </svg>
      <svg viewBox="0 0 20 12" className="ml-[12px] h-3 w-5">
        <path d="M.7 .7h16.600v10.600H.7z" fill="none" stroke="#fff" strokeWidth="1.300" />
        <path d="M2.300 2.500h12v7h-12zM18 4h1.500v4H18z" fill="#fff" />
      </svg>
    </div>
    <div className="mt-[13px] flex h-4 items-center pl-[14px]">
      <svg viewBox="0 0 16 16" className="size-4" fill="none" stroke="#fff" strokeWidth="1.100">
        <path d="M.7 15.500C.7 7 7 1.200 15.500 1.200M4.200 15.500C4.200 9 9 4.800 15.500 4.800M7.800 15.500c0-4.500 3.200-7.200 7.700-7.200" />
        <circle cx="14" cy="14" r="1.500" fill="#fff" stroke="none" />
      </svg>
      <svg viewBox="0 0 21 16" className="ml-[11px] h-4 w-[21px]" fill="none" stroke="#fff" strokeWidth="1.200">
        <path d="M.7 5h3L8 1.500v13L3.700 11h-3z" />
        <path d="M10.500 6c1 1.200 1 3 0 4M13.500 4c2.200 2.400 2.200 6 0 8.500" />
        <path d="M17 1.500c3.500 4 3.500 9.500 0 13.500" stroke="#777" />
      </svg>
    </div>
    <div className="mt-[22px] text-center text-[14.500px] leading-[22px] tracking-[-0.2px] whitespace-nowrap">
      <div>11:33 PM</div>
      <div className="-mx-1">10/24/2021</div>
    </div>
    <div className="mt-[24px] flex justify-center">
      <svg viewBox="0 0 20 20" className="size-5" fill="none" stroke="#fff" strokeWidth="1.200">
        <path d="M.6 .6h18.800v15.500h-7L10 18.800L7.600 16.100h-7z" />
      </svg>
    </div>
    <div className="mt-auto mb-[5px] h-px bg-[#68686a]" />
  </aside>
);

export default function App() {
  return (
    <div className="flex h-[1080px] w-[1920px] overflow-hidden bg-white font-['Open_Sans','Noto_Sans',sans-serif]">
      <div className="flex w-[1842px] flex-col">
        <TabStrip />
        <AddressBar />
        <PageBody />
      </div>
      <TaskBar />
    </div>
  );
}
